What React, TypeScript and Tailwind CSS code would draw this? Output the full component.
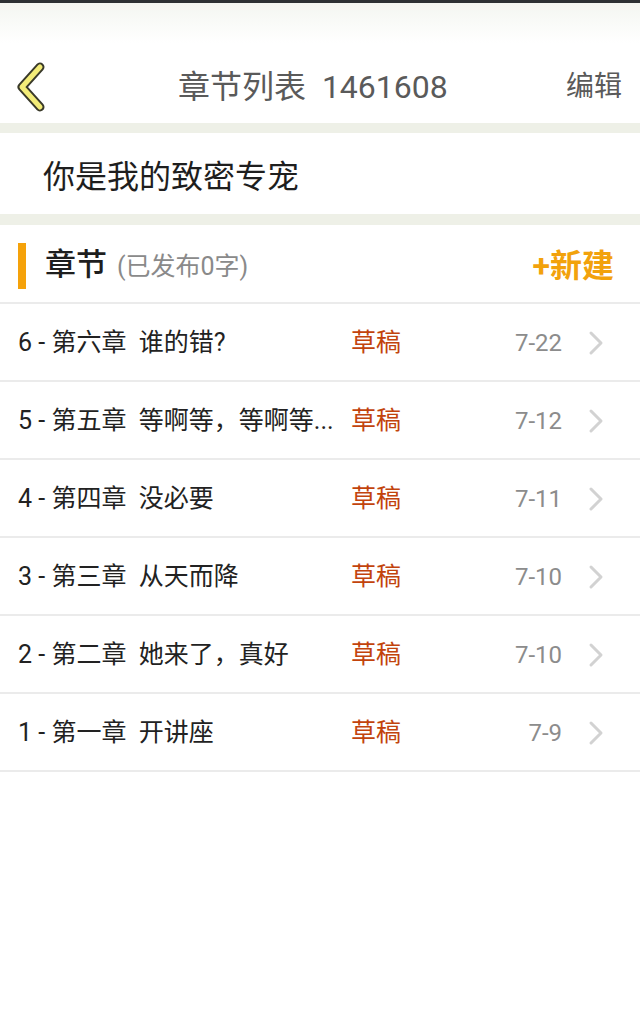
import React from "react";

const chapters = [
  { no: 6, name: "第六章", title: "谁的错?", date: "7-22" },
  { no: 5, name: "第五章", title: "等啊等，等啊等...", date: "7-12" },
  { no: 4, name: "第四章", title: "没必要", date: "7-11" },
  { no: 3, name: "第三章", title: "从天而降", date: "7-10" },
  { no: 2, name: "第二章", title: "她来了，真好", date: "7-10" },
  { no: 1, name: "第一章", title: "开讲座", date: "7-9" },
];

const font = { fontFamily: '"Roboto", "Noto Sans CJK SC", sans-serif' };

const BackIcon = () => (
  <svg width="40" height="52" viewBox="0 0 40 52" className="block">
    <polyline
      points="26,6 8,26 26,46"
      fill="none"
      stroke="#3a3a2a"
      strokeWidth="9"
      strokeLinecap="round"
      strokeLinejoin="round"
    />
    <polyline
      points="26,6 8,26 26,46"
      fill="none"
      stroke="#f3ec78"
      strokeWidth="5"
      strokeLinecap="round"
      strokeLinejoin="round"
    />
  </svg>
);

const Chevron = () => (
  <svg width="18" height="26" viewBox="0 0 18 26" className="block">
    <polyline
      points="4,3 14,13 4,23"
      fill="none"
      stroke="#d2d2d2"
      strokeWidth="3"
      strokeLinecap="round"
      strokeLinejoin="round"
    />
  </svg>
);

export default function App() {
  return (
    <div className="w-[640px] h-[1012px] bg-white overflow-hidden" style={font}>
      <div className="h-[3px] bg-[#2d3134]" />
      <div className="h-[40px] bg-gradient-to-b from-[#f4f6f1] to-white" />

      {/* nav */}
      <div className="h-[80px] pt-[8px] flex items-center pl-[14px] pr-[18px]">
        <BackIcon />
        <div className="text-[32px] text-[#5a5a5a] ml-[124px]">
          章节列表&nbsp;&nbsp;1461608
        </div>
        <div className="ml-auto text-[28px] text-[#5a5a5a]">编辑</div>
      </div>

      <div className="h-[10px] bg-[#eef0e7]" />

      <div className="h-[81px] flex items-center pl-[43px] pt-[7px]">
        <span className="text-[32px] text-[#1e1e1e]">你是我的致密专宠</span>
      </div>

      <div className="h-[11px] bg-[#eef0e7]" />

      {/* section header */}
      <div className="h-[79px] flex items-center border-b-2 border-[#ebebeb] pr-[26px] pt-[4px]">
        <div className="w-[8px] h-[46px] bg-[#f5a20a] ml-[18px]" />
        <span className="text-[31px] font-medium text-[#1e1e1e] ml-[19px]">章节</span>
        <span className="text-[25px] text-[#8a8a8a] ml-[10px] mt-[2px]">(已发布0字)</span>
        <span className="ml-auto text-[32px] font-bold text-[#f2a20c]">+新建</span>
      </div>

      {chapters.map((c) => (
        <div
          key={c.no}
          className="h-[78px] flex items-center border-b-2 border-[#ebebeb] pl-[18px] pr-[35px] pt-[2px]"
        >
          <div className="w-[318px] whitespace-nowrap text-[25px] text-[#222]">
            {c.no} - {c.name}&nbsp;&nbsp;{c.title}
          </div>
          <div className="ml-[15px] text-[25px] text-[#c2430c]">草稿</div>
          <div className="flex-1 text-right text-[24px] text-[#8c8c8c]">{c.date}</div>
          <div className="ml-[25px]">
            <Chevron />
          </div>
        </div>
      ))}
    </div>
  );
}
